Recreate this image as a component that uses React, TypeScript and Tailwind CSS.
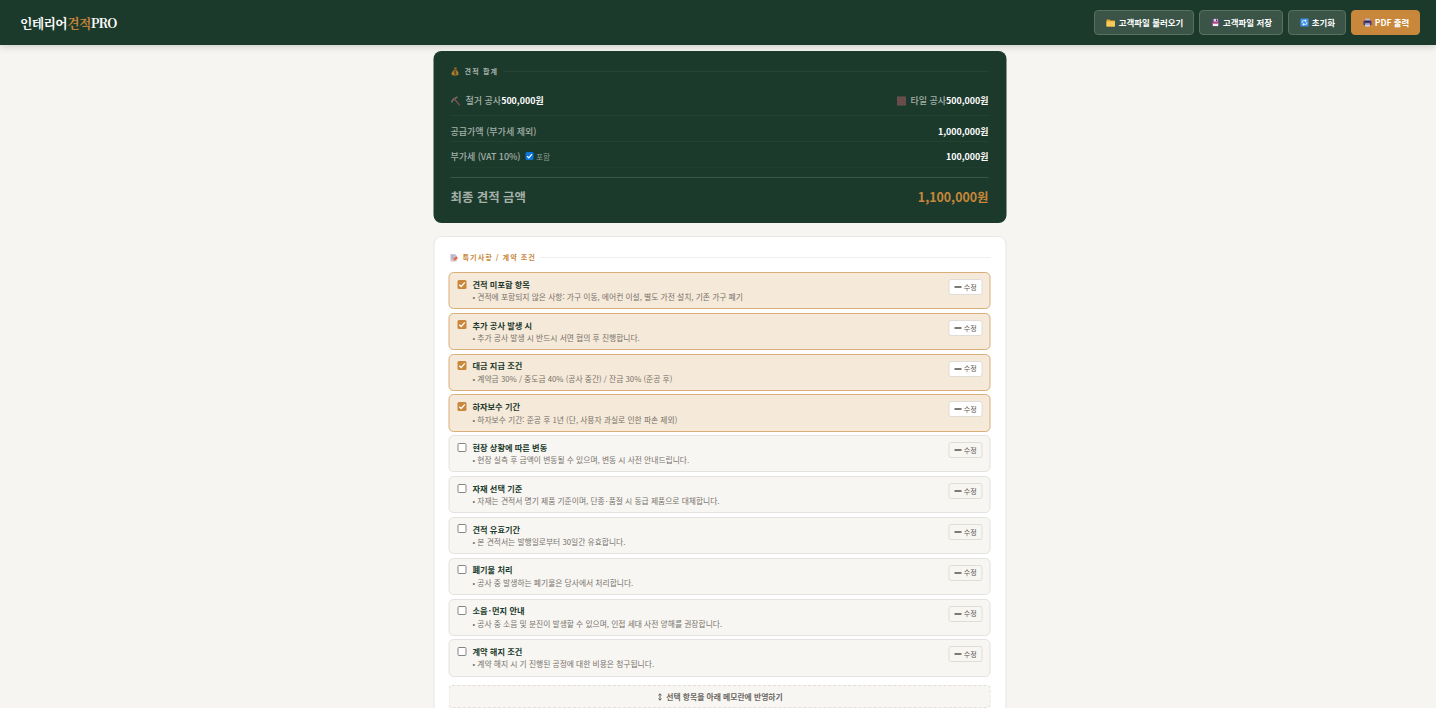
import React from "react";
import clsx from "clsx";

type Note = { title: string; desc: string; checked: boolean };

const notes: Note[] = [
    {
        title: "견적 미포함 항목",
        desc: "견적에 포함되지 않은 사항: 가구 이동, 에어컨 이설, 별도 가전 설치, 기존 가구 폐기",
        checked: true,
    },
    {
        title: "추가 공사 발생 시",
        desc: "추가 공사 발생 시 반드시 서면 협의 후 진행합니다.",
        checked: true,
    },
    {
        title: "대금 지급 조건",
        desc: "계약금 30% / 중도금 40% (공사 중간) / 잔금 30% (준공 후)",
        checked: true,
    },
    {
        title: "하자보수 기간",
        desc: "하자보수 기간: 준공 후 1년 (단, 사용자 과실로 인한 파손 제외)",
        checked: true,
    },
    {
        title: "현장 상황에 따른 변동",
        desc: "현장 실측 후 금액이 변동될 수 있으며, 변동 시 사전 안내드립니다.",
        checked: false,
    },
    {
        title: "자재 선택 기준",
        desc: "자재는 견적서 명기 제품 기준이며, 단종·품절 시 동급 제품으로 대체합니다.",
        checked: false,
    },
    {
        title: "견적 유효기간",
        desc: "본 견적서는 발행일로부터 30일간 유효합니다.",
        checked: false,
    },
    {
        title: "폐기물 처리",
        desc: "공사 중 발생하는 폐기물은 당사에서 처리합니다.",
        checked: false,
    },
    {
        title: "소음·먼지 안내",
        desc: "공사 중 소음 및 분진이 발생할 수 있으며, 인접 세대 사전 양해를 권장합니다.",
        checked: false,
    },
    {
        title: "계약 해지 조건",
        desc: "계약 해지 시 기 진행된 공정에 대한 비용은 청구됩니다.",
        checked: false,
    },
];

const FolderIcon = () => (
    <svg viewBox="0 0 20 20" className="size-[10px]">
        <path d="M1 4q0-1 1-1h5l2 2h8q1 0 1 1v10q0 1-1 1H2q-1 0-1-1z" fill="#e8a62c" />
        <path d="M1 7h17v9q0 1-1 1H2q-1 0-1-1z" fill="#f8ca5c" />
    </svg>
);

const FloppyIcon = () => (
    <svg viewBox="0 0 20 20" className="size-[9px]">
        <path d="M2 2h14l2 2v14H2z" fill="#6d3f8a" />
        <path d="M6 2h9v6H6z" fill="#e4d6e4" />
        <path d="M11 3h2.500v4H11z" fill="#453055" />
        <path d="M4 11h12v7H4z" fill="#f5eef4" />
        <path d="M4 10h12v3H4z" fill="#d2577b" />
    </svg>
);

const ResetIcon = () => (
    <svg viewBox="0 0 20 20" className="size-[9px]">
        <rect x="1" y="1" width="18" height="18" rx="2" fill="#3f93e8" />
        <path
            d="M5 11V8q0-2 2-2h5M15 9v3q0 2-2 2H8"
            fill="none"
            stroke="#fff"
            strokeWidth="1.800"
        />
        <path d="M11 3l4 3-4 3zM9 11l-4 3 4 3z" fill="#fff" />
    </svg>
);

const PrinterIcon = () => (
    <svg viewBox="0 0 20 20" className="size-[9px]">
        <path d="M5 1h10v7H5z" fill="#b9b4d8" />
        <path d="M1 8q0-2 2-2h14q2 0 2 2v6q0 2-2 2H3q-2 0-2-2z" fill="#4d3c78" />
        <path d="M4 6h12v3H4z" fill="#302750" />
        <path d="M5 12h10v7H5z" fill="#d6d2e4" />
        <path d="M7 14h6v1.500H7z" fill="#6f87c8" />
    </svg>
);

const MoneyBagIcon = () => (
    <svg viewBox="0 0 20 20" className="size-[9px] opacity-75">
        <path d="M8 1h6l-2 5H9z" fill="#c97a22" />
        <path d="M8 6h5q6 5 5 10-1 3-8 3t-8-3Q2 11 8 6z" fill="#d79835" />
        <path d="M7 5h7v2H7z" fill="#7e4a20" />
        <path
            d="M13 10q-5-2-5 .8 0 1.500 2.500 1.700 2.500.3 2.500 1.700 0 2.500-5 1M10.500 8.500v9"
            fill="none"
            stroke="#5d3d19"
            strokeWidth="1.500"
        />
    </svg>
);

const PickIcon = () => (
    <svg viewBox="0 0 20 20" className="size-[10px]">
        <path d="M8 6l10 12" stroke="#76504b" strokeWidth="2.600" strokeLinecap="round" />
        <path d="M2 13Q4 6 14 2" fill="none" stroke="#76706c" strokeWidth="3" />
        <path d="M6 4l4 5" stroke="#76504b" strokeWidth="3.500" />
    </svg>
);

const BrickIcon = () => (
    <svg viewBox="0 0 20 20" className="size-[10px]">
        <path d="M1 1h18v18H1z" fill="#6c504e" />
        <path
            d="M1 5.500h18M1 10h18M1 14.500h18M7 1v4.500M14 5.500V10M6 10v4.500M13 14.500V19"
            stroke="#614744"
            strokeWidth="1"
        />
    </svg>
);

const MemoIcon = () => (
    <svg viewBox="0 0 20 20" className="size-[9px]">
        <path d="M2 2h11l3 4v13H2z" fill="#ccc8d8" />
        <path d="M4 6h7M4 9h6M4 12h4" stroke="#9d95b0" strokeWidth="1.200" />
        <path d="M8 17l1-5 6-5 4 4-6 5z" fill="#e2694e" />
        <path d="M8 17l1-4 3 3z" fill="#edb46b" />
    </svg>
);

const HeaderButton = ({
    icon,
    label,
    className,
}: {
    icon: React.ReactNode;
    label: string;
    className: string;
}) => (
    <button
        className={clsx(
            "flex h-[25px] items-center justify-center gap-[3px] rounded-[4px] border pl-px text-[8.450px] font-bold whitespace-nowrap text-white",
            className
        )}
    >
        {icon}
        <span>{label}</span>
    </button>
);

const Checkbox = ({ checked, className }: { checked: boolean; className: string }) => (
    <span
        className={clsx(
            "flex shrink-0 items-center justify-center rounded-[1.500px]",
            !checked && "border border-[#858585] bg-white",
            className
        )}
    >
        {checked && (
            <svg viewBox="0 0 10 10" className="size-full">
                <path d="M2 5.200l2.100 2.100L8.100 2.600" fill="none" stroke="#fff" strokeWidth="1.500" />
            </svg>
        )}
    </span>
);

const Amount = ({ children }: { children: React.ReactNode }) => (
    <b className="text-[8.900px] text-white">{children}</b>
);

// gives the middle dot a little air on both sides
const Dotted = ({ text }: { text: string }) => (
    <>
        {text.split("·").map((part, i) => (
            <React.Fragment key={part}>
                {i > 0 && <span className="px-[0.900px]">·</span>}
                {part}
            </React.Fragment>
        ))}
    </>
);

const SummarySection = () => (
    <section className="h-[172px] rounded-[8px] bg-[#1c3a2c] px-[17.500px] pt-[14px] text-[9px] font-medium text-[#a4b1a9]">
        <div className="flex h-[12px] items-center gap-[5px] text-[7.050px] font-bold tracking-[1.150px]">
            <MoneyBagIcon />
            <span>견적 합계</span>
            <i className="h-px flex-1 bg-[#264335]" />
        </div>
        <div className="mt-[10px] flex h-[29px] items-center justify-between border-b border-[#244133]">
            <div className="flex items-center">
                <PickIcon />
                <span className="ml-[5px]">철거 공사</span>
                <Amount>500,000원</Amount>
            </div>
            <div className="flex items-center">
                <BrickIcon />
                <span className="ml-[4px]">타일 공사</span>
                <Amount>500,000원</Amount>
            </div>
        </div>
        <div className="flex h-[25.500px] items-center justify-between border-b border-[#244133] pt-[6px]">
            <span>공급가액 (부가세 제외)</span>
            <Amount>1,000,000원</Amount>
        </div>
        <div className="flex h-[26px] items-center justify-between border-b border-[#203e30] pt-[6px]">
            <div className="flex items-center">
                <span className="tracking-[-0.050px]">부가세 (VAT 10%)</span>
                <Checkbox checked className="mb-[2px] ml-[4.500px] size-[8px] bg-[#0875d8]" />
                <span className="ml-[3px] text-[7.700px] font-normal text-[#8b9d92]">포함</span>
            </div>
            <Amount>100,000원</Amount>
        </div>
        <div className="mt-[9.500px] flex items-center justify-between border-t border-[#3a5446] pt-[9px] text-[12.400px] leading-[20px] font-bold">
            <span>최종 견적 금액</span>
            <span className="text-[#c8873a]">1,100,000원</span>
        </div>
    </section>
);

const NoteItem = ({ title, desc, checked }: Note) => (
    <div
        className={clsx(
            "flex h-[37.200px] shrink-0 items-start rounded-[5px] border pr-[7.500px] pl-[7.500px]",
            checked ? "border-[#d9ae79] bg-[#f5e9d9]" : "border-[#e4e2de] bg-[#f7f6f3]"
        )}
    >
        <Checkbox
            checked={checked}
            className={clsx("mt-[6.500px] size-[9px]", checked && "bg-[#c8873a]")}
        />
        <div className="ml-[6.500px] flex-1 pt-[4.800px]">
            <h3 className="text-[8.200px] leading-[12.500px] font-bold text-[#1c3a2c]">
                <Dotted text={title} />
            </h3>
            <p className="mt-[0.800px] text-[7.780px] leading-[12.500px] text-[#77716a]">
                • <Dotted text={desc} />
            </p>
        </div>
        <button
            className={clsx(
                "mt-[6px] flex h-[16px] w-[34px] items-center justify-center gap-[2.500px] rounded-[2.500px] border border-[#e0ddd6] pl-px text-[7.050px] text-[#5d5953]",
                checked && "bg-white"
            )}
        >
            <i className="h-[2px] w-[7px] bg-[#7d7973]" />
            수정
        </button>
    </div>
);

const NotesSection = () => (
    <section className="mt-[13px] h-[520px] rounded-[8px] border border-[#e8e6e1] bg-white px-[14.500px] pt-[14px]">
        <div className="ml-px flex h-[12px] items-center gap-[4px] text-[7.150px] font-bold tracking-[1px] text-[#c8873a]">
            <MemoIcon />
            <span>특기사항 / 계약 조건</span>
            <i className="h-px flex-1 bg-[#f0eeeb]" />
        </div>
        <div className="mt-[9px] flex flex-col gap-[3.640px]">
            {notes.map((n) => (
                <NoteItem key={n.title} {...n} />
            ))}
        </div>
        <button className="mt-[8px] flex h-[23px] w-full items-center justify-center gap-[4px] rounded-[4px] border border-dashed border-[#e2dfd9] bg-[#f7f6f3] pt-px pl-px text-[7.800px] font-bold text-[#6b665f]">
            <svg viewBox="0 0 6 10" className="h-[8px] w-[5px]">
                <path d="M3 1v8M1 3l2-2 2 2M1 7l2 2 2-2" fill="none" stroke="#5d5953" strokeWidth="1.200" />
            </svg>
            <span>선택 항목을 아래 메모란에 반영하기</span>
        </button>
    </section>
);

const App: React.FC = () => {
    return (
        <div
            lang="ko"
            className="h-[708px] overflow-hidden bg-[#f7f5f1] font-['Noto_Sans_CJK_KR',sans-serif]"
        >
            <header className="relative flex h-[45px] items-center justify-between bg-[#1c3a2c] pr-[16px] pl-[20px] shadow-[0_1px_8px_rgba(0,0,0,0.2)]">
                <h1 className="font-['Noto_Serif_CJK_KR','Noto_Serif_KR','Liberation_Serif','Noto_Sans_CJK_KR',serif] text-[12.850px] font-bold tracking-[-0.620px] whitespace-nowrap text-white">
                    인테리어<span className="text-[#c8873a]">견적</span>PRO
                </h1>
                <div className="flex gap-[5px]">
                    <HeaderButton
                        icon={<FolderIcon />}
                        label="고객파일 불러오기"
                        className="w-[100px] border-[#57705f] bg-[#3a5547]"
                    />
                    <HeaderButton
                        icon={<FloppyIcon />}
                        label="고객파일 저장"
                        className="w-[84px] border-[#57705f] bg-[#3a5547]"
                    />
                    <HeaderButton
                        icon={<ResetIcon />}
                        label="초기화"
                        className="w-[58px] border-[#57705f] bg-[#3a5547]"
                    />
                    <HeaderButton
                        icon={<PrinterIcon />}
                        label="PDF 출력"
                        className="w-[69px] border-[#c8873a] bg-[#c8873a]"
                    />
                </div>
            </header>
            <main className="mx-auto w-[573px] translate-x-[1.500px] pt-[6px]">
                <SummarySection />
                <NotesSection />
            </main>
        </div>
    );
};

export default App;
